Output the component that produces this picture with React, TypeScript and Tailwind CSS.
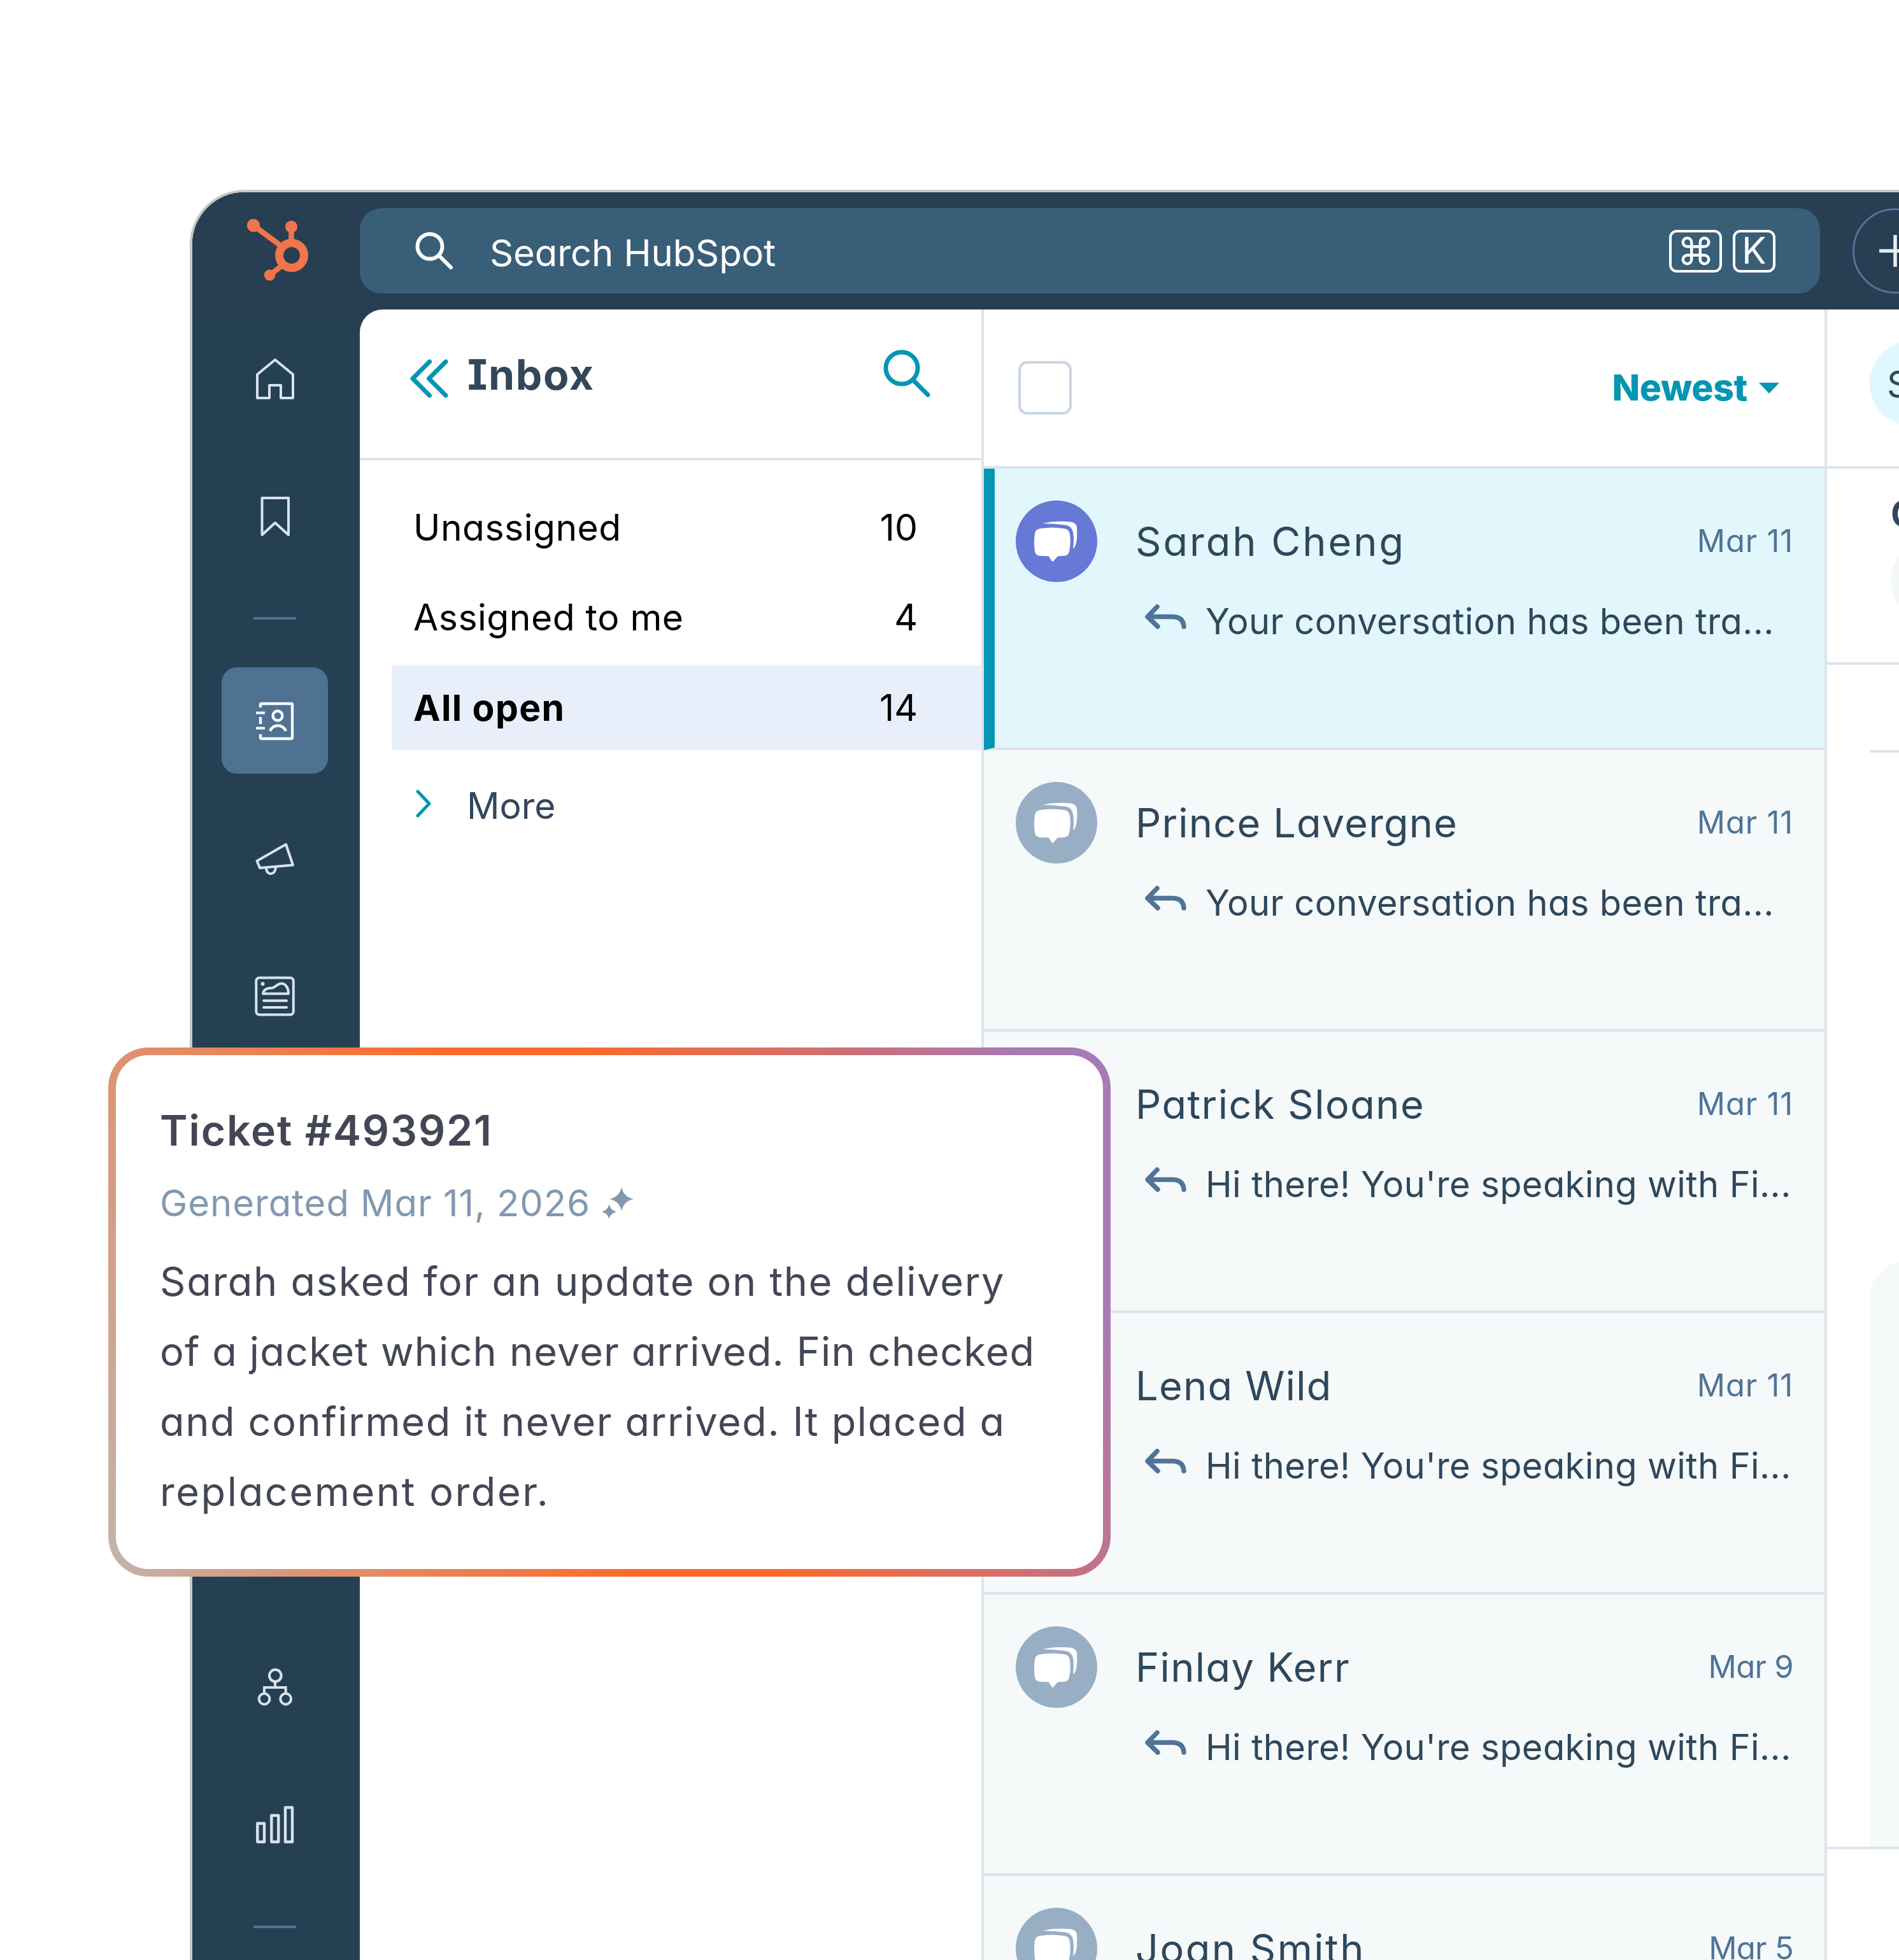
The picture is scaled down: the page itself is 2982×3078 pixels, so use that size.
import React from 'react';

interface Conversation {
  name: string;
  date: string;
  snippet: string;
  selected?: boolean;
  nameSpacing: string;
  dateSpacing: string;
}

const conversations: Conversation[] = [
  { name: 'Sarah Cheng', date: 'Mar 11', snippet: 'Your conversation has been tra...', selected: true, nameSpacing: 'tracking-[3px]', dateSpacing: 'tracking-[0.8px]' },
  { name: 'Prince Lavergne', date: 'Mar 11', snippet: 'Your conversation has been tra...', nameSpacing: 'tracking-[1.2px]', dateSpacing: 'tracking-[0.8px]' },
  { name: 'Patrick Sloane', date: 'Mar 11', snippet: "Hi there! You're speaking with Fi...", nameSpacing: 'tracking-[1.5px]', dateSpacing: 'tracking-[0.8px]' },
  { name: 'Lena Wild', date: 'Mar 11', snippet: "Hi there! You're speaking with Fi...", nameSpacing: 'tracking-[1.3px]', dateSpacing: 'tracking-[0.8px]' },
  { name: 'Finlay Kerr', date: 'Mar 9', snippet: "Hi there! You're speaking with Fi...", nameSpacing: 'tracking-[1.4px]', dateSpacing: 'tracking-[-0.7px]' },
  { name: 'Joan Smith', date: 'Mar 5', snippet: "Hi there! You're speaking with Fi...", nameSpacing: 'tracking-[2.5px]', dateSpacing: 'tracking-[-0.7px]' },
];

const HubSpotLogo = () => (
  <svg width="98" height="98" viewBox="0 0 98 98" fill="none" stroke="#f1744a">
    <circle cx="71" cy="57" r="19.5" strokeWidth="13" />
    <path d="M11 10 L54 42 M70.5 12 V36 M57 72 L37 88" strokeWidth="8.5" />
    <circle cx="11" cy="10" r="10.3" fill="#f1744a" stroke="none" />
    <circle cx="70.5" cy="12" r="9.5" fill="#f1744a" stroke="none" />
    <circle cx="36.5" cy="88" r="8.8" fill="#f1744a" stroke="none" />
  </svg>
);

const NavIcon: React.FC<{ children: React.ReactNode; color?: string }> = ({ children, color = '#d6e3ee' }) => (
  <svg width="72" height="72" viewBox="0 0 72 72" fill="none" stroke={color} strokeWidth="4" strokeLinejoin="round">
    {children}
  </svg>
);

const Sidebar = () => (
  <nav className="flex w-[263px] shrink-0 flex-col items-center pt-[1px] pr-[4px]">
    <div className="flex h-[216px] items-center">
      <NavIcon>
        <path d="M36 6 L8 29 V66 H27 V46 H45 V66 H64 V29 Z" />
      </NavIcon>
    </div>
    <div className="flex h-[217px] items-center">
      <NavIcon>
        <path d="M15.5 7 H57 V65 L36 46 L15.5 65 Z" />
      </NavIcon>
    </div>
    <div className="flex h-[105px] items-center">
      <div className="h-1 w-[67px] bg-[#4f7192]" />
    </div>
    <div className="flex h-[216px] items-center">
      <div className="flex size-[167px] items-center justify-center rounded-[24px] bg-[#4f7192]">
        <NavIcon color="#f3fafe">
          <path d="M13 15 V11 Q13 9 15 9 H61 Q63 9 63 11 V62 Q63 64 61 64 H15 Q13 64 13 62 V57 M13 30 V41" strokeWidth="4.4" />
          <path d="M6 23.5 H20 M6 47.5 H20" strokeWidth="4.2" />
          <circle cx="40" cy="28" r="7.5" strokeWidth="4.4" />
          <path d="M28 52 C31 45.5 35 43.5 40 43.5 C46 43.5 50 45.5 53 52" strokeWidth="4.4" />
        </NavIcon>
      </div>
    </div>
    <div className="flex h-[217px] items-center">
      <NavIcon>
        <path d="M7.5 40 L53 14 L64 46.5 L12 51 Z" />
        <path d="M22 50.5 C22 64 37 63 37 49.5" />
      </NavIcon>
    </div>
    <div className="flex h-[217px] items-center">
      <NavIcon>
        <rect x="6.3" y="7.5" width="58.5" height="58" rx="5" />
        <path d="M17 32.5 C18 26 24 23.5 31 23.5 C36 23.5 39 16.5 46 16.5 C53 16.5 57 24 57 32.5 Z" />
        <path d="M18 43.5 H54 M18 54 H54" strokeLinecap="round" />
        <circle cx="16.5" cy="17" r="3" fill="#d6e3ee" stroke="none" />
      </NavIcon>
    </div>
    <div className="mt-[868px] flex h-[217px] items-center">
      <NavIcon>
        <circle cx="36.3" cy="18.4" r="9.3" />
        <circle cx="19" cy="55" r="8.4" />
        <circle cx="52.7" cy="55" r="8.4" />
        <path d="M36 28 V37 M19 46 V37 H52.7 V46" strokeLinejoin="miter" />
      </NavIcon>
    </div>
    <div className="flex h-[217px] items-center">
      <NavIcon>
        <path d="M8.3 34.5 H19 V63.5 H8.3 Z M30.3 22 H41.3 V63.5 H30.3 Z M52 9.5 H63 V63.5 H52 Z" strokeWidth="4.4" />
      </NavIcon>
    </div>
    <div className="flex h-[105px] items-center">
      <div className="h-1 w-[67px] bg-[#4f7192]" />
    </div>
  </nav>
);

const TopBar = () => (
  <header className="flex h-[184px] bg-[#283e52]">
    <div className="w-[263px] shrink-0 pt-[42px] pl-[85px]">
      <HubSpotLogo />
    </div>
    <div className="mt-[25px] flex h-[134px] w-[2293px] shrink-0 items-center rounded-[34px] bg-[#395e78] pl-[86px] pr-[70px] text-white">
      <svg width="62" height="62" viewBox="0 0 62 62" fill="none" stroke="white" strokeWidth="6" strokeLinecap="round">
        <circle cx="24" cy="24" r="19.5" />
        <path d="M38 38 L57 57" />
      </svg>
      <span className="mt-[6px] ml-[56px] text-[58px] tracking-[-0.1px]">Search HubSpot</span>
      <div className="ml-auto flex gap-[17px]">
        <div className="flex h-[67px] w-[83px] items-center justify-center rounded-[12px] border-4 border-white">
          <svg width="54" height="54" viewBox="0 0 24 24" fill="none" stroke="white" strokeWidth="2">
            <path d="M15 6v12a3 3 0 1 0 3-3H6a3 3 0 1 0 3 3V6a3 3 0 1 0-3 3h12a3 3 0 1 0-3-3" />
          </svg>
        </div>
        <div className="flex size-[67px] items-center justify-center rounded-[12px] border-4 border-white text-[57px]">K</div>
      </div>
    </div>
    <div className="mt-[25px] ml-[51px] flex size-[134px] shrink-0 items-center justify-center rounded-full border-[3px] border-[#4f7497]">
      <svg width="52" height="52" viewBox="0 0 52 52" stroke="#e6edf3" strokeWidth="5.5">
        <path d="M26 1 V51 M1 26 H51" />
      </svg>
    </div>
  </header>
);

const views = [
  { label: 'Unassigned', count: 10 },
  { label: 'Assigned to me', count: 4 },
  { label: 'All open', count: 14, active: true },
];

const InboxPanel = () => (
  <section className="w-[980px] shrink-0 rounded-tl-[36px] border-r-4 border-[#dfe3eb] bg-white">
    <div className="flex h-[237px] items-start border-b-4 border-[#dfe3eb] pl-[77px] pr-[80px]">
      <svg className="mt-[76px]" width="64" height="66" viewBox="0 0 64 66" fill="none" stroke="#0596b3" strokeWidth="7" strokeLinecap="round" strokeLinejoin="round">
        <path d="M32.5 6 L6 32.5 L32.5 59 M58 6 L31.5 32.5 L58 59" />
      </svg>
      <h1 className="ml-[28px] mt-[72px] text-[66px] leading-[60px] font-bold tracking-[1.6px] text-[#33475b] [font-feature-settings:'cv11','cv08']">Inbox</h1>
      <svg className="ml-auto mt-[61px]" width="76" height="80" viewBox="0 0 76 80" fill="none" stroke="#0596b3" strokeWidth="7" strokeLinecap="round">
        <circle cx="31" cy="31" r="25" />
        <path d="M49 50 L72 73" />
      </svg>
    </div>
    <ul className="flex flex-col gap-[8.5px] pt-[39px] pl-[50px] text-[57px] text-black">
      {views.map((view) => (
        <li
          key={view.label}
          className={`flex h-[133px] items-center justify-between pl-[34px] pr-[100px] ${view.active ? 'bg-[#e8effa]' : ''}`}
        >
          <span className={view.active ? 'font-bold tracking-[1.4px]' : 'tracking-[0.5px]'}>{view.label}</span>
          <span>{view.count}</span>
        </li>
      ))}
      <li className="mt-[12px] flex h-[133px] items-center pl-[36px] text-[#33475b]">
        <svg className="mb-[6px]" width="30" height="48" viewBox="0 0 30 48" fill="none" stroke="#0596b3" strokeWidth="5" strokeLinecap="round" strokeLinejoin="round">
          <path d="M5 5 L23 24 L5 43" />
        </svg>
        <span className="mt-[2px] ml-[52px]">More</span>
      </li>
    </ul>
  </section>
);

const ChatAvatar: React.FC<{ selected?: boolean }> = ({ selected }) => (
  <div className={`size-[128px] shrink-0 rounded-full ${selected ? 'bg-[#6779d6]' : 'bg-[#98aec4]'}`}>
    <svg width="128" height="128" viewBox="0 0 128 128" fill="white">
      <path d="M38 44 Q58 41 76 44 Q84 45 85 53 Q87 66 84 80 Q83 86 76 87 L66 87.5 L58.5 96 Q56.5 96 52 87.5 L38 87 Q31 86 30 80 Q28 66 30 52 Q31 45 38 44 Z" />
      <path d="M42 36 Q62 31 86 33.5 Q95 34.5 96 42 Q97 62 94 70 Q93 74 90 75.5 Q92 62 90 50 Q88 40 78 38.5 Q60 36 42 36 Z" />
    </svg>
  </div>
);

const ReplyArrow = () => (
  <svg width="70" height="44" viewBox="0 0 70 44" fill="none" stroke="#4f7497" strokeWidth="7.5" strokeLinecap="round" strokeLinejoin="round">
    <path d="M21 6 L6 21.5 L22 37 M8 21.5 H46 Q62 22 63 37" />
  </svg>
);

const ConversationRow: React.FC<Conversation> = ({ name, date, snippet, selected, nameSpacing, dateSpacing }) => (
  <li
    className={`h-[442px] shrink-0 border-b-4 border-b-[#dde2eb] pt-[50px] pr-[49px] ${
      selected ? 'border-l-[17px] border-l-[#0596b3] bg-[#e1f7fc] pl-[33px]' : 'bg-[#f5f9fa] pl-[50px]'
    }`}
  >
    <div className="flex h-[128px] items-center">
      <ChatAvatar selected={selected} />
      <span className={`ml-[60px] text-[63px] text-[#2e475b] ${nameSpacing}`}>{name}</span>
      <span className={`ml-auto text-[49px] text-[#4f7497] ${dateSpacing}`}>{date}</span>
    </div>
    <div className="mt-[21px] flex h-[80px] items-center pl-[201px]">
      <div className="mb-[13px]">
        <ReplyArrow />
      </div>
      <span className="mt-[2px] ml-[27px] whitespace-nowrap text-[56px] tracking-[0.4px] text-[#2e475b]">{snippet}</span>
    </div>
  </li>
);

const ConversationList = () => (
  <section className="w-[1324px] shrink-0 border-r-4 border-[#dfe3eb] bg-white">
    <div className="flex h-[250px] items-center border-b-4 border-[#dde2eb] pl-[54px] pr-[71px]">
      <div className="size-[84px] rounded-[14px] border-4 border-[#c9d6e3]" />
      <span className="ml-auto text-[57px] font-extrabold tracking-[-0.3px] text-[#0596b3]">Newest</span>
      <svg className="ml-[18px]" width="32" height="17" viewBox="0 0 32 17" fill="#0596b3">
        <path d="M0 0 H32 L16 17 Z" />
      </svg>
    </div>
    <ul className="flex flex-col">
      {conversations.map((conversation) => (
        <ConversationRow key={conversation.name} {...conversation} />
      ))}
    </ul>
  </section>
);

const DetailPanel = () => (
  <section className="w-[113px] overflow-hidden bg-white text-[#33475b]">
    <div className="h-[250px] border-b-4 border-[#dfe3eb] pt-[49px] pl-[67px]">
      <div className="flex h-[134px] w-[400px] items-center rounded-full bg-[#e0f7fd] pt-[3px] pl-[27px] text-[57px]">Sarah Cheng</div>
    </div>
    <div className="h-[308px] border-b-4 border-[#dfe3eb] pt-[41px] pl-[100px]">
      <div className="text-[56px] leading-[60px] font-bold">Owner</div>
      <div className="mt-[8px] size-[134px] rounded-full bg-[#f4f7f8]" />
    </div>
    <div className="ml-[67px] h-[138px] border-b-4 border-[#dfe3eb]" />
    <div className="flex h-[1722px] border-b-4 border-[#dfe3eb] pt-[798px] pl-[67px]">
      <div className="w-[400px] shrink-0 rounded-t-[60px] bg-[#f5f9fa]" />
    </div>
  </section>
);

const TicketCard = () => (
  <div className="absolute top-[1645px] left-[170px] h-[831px] w-[1574px] rounded-[63px] bg-[linear-gradient(69.6deg,#c2b5ad_0%,#dd9371_17%,#fd6a2b_44%,#fd6a2b_56%,#c8707f_80%,#a77bb5_92%)] p-[12px]">
    <div className="h-full rounded-[51px] bg-white pt-[88px] pl-[69px] text-[#434655]">
      <h2 className="text-[66px] leading-[60px] font-semibold tracking-[1.9px]">Ticket #493921</h2>
      <div className="mt-[54px] flex h-[60px] items-center text-[#8299b0]">
        <span className="text-[58px] tracking-[0.95px]">Generated Mar 11, 2026</span>
        <svg className="ml-[17px]" width="52" height="52" viewBox="0 0 52 52" fill="#8299b0">
          <path d="M32 1 Q35 16.5 51 20 Q35 23.5 32 39 Q29 23.5 13 20 Q29 16.5 32 1 Z" />
          <path d="M12.5 28 Q14.5 37.5 24 40 Q14.5 42.5 12.5 51 Q10.5 42.5 1 40 Q10.5 37.5 12.5 28 Z" />
        </svg>
      </div>
      <p className="mt-[38px] text-[63px] leading-[110px] whitespace-nowrap">
        <span className="block tracking-[1.72px]">Sarah asked for an update on the delivery</span>
        <span className="block tracking-[1.15px]">of a jacket which never arrived. Fin checked</span>
        <span className="block tracking-[1.62px]">and confirmed it never arrived. It placed a</span>
        <span className="block tracking-[2.6px]">replacement order.</span>
      </p>
    </div>
  </div>
);

const App = () => (
  <main className="relative h-[3078px] w-[2982px] overflow-hidden bg-white pt-[298px] pl-[298px] font-['Inter',sans-serif] [font-feature-settings:'cv11']">
    <div className="h-[2780px] w-[2684px] overflow-hidden rounded-tl-[86px] border-t-4 border-l-4 border-[#c3cac5] bg-[#264053]">
      <TopBar />
      <div className="flex h-[2592px]">
        <Sidebar />
        <InboxPanel />
        <ConversationList />
        <DetailPanel />
      </div>
    </div>
    <TicketCard />
  </main>
);

export default App;
